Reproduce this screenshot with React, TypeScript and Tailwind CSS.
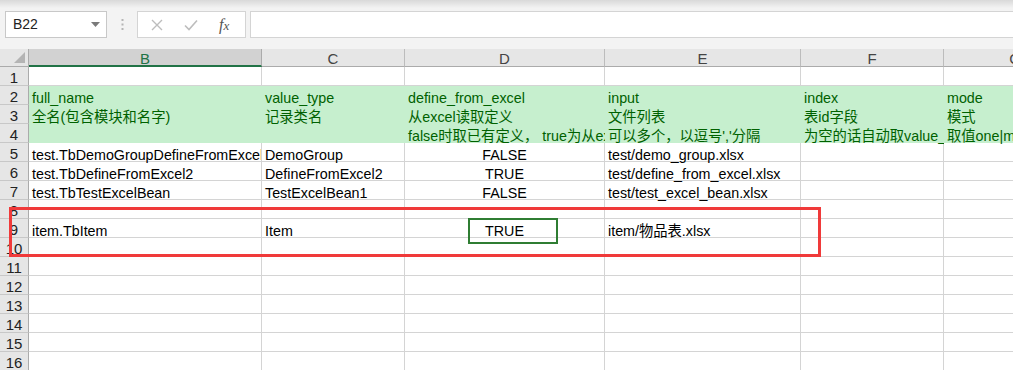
import React from "react";

const FONT = '"Liberation Sans", "Noto Sans CJK SC", sans-serif';

const cols = ["B", "C", "D", "E", "F", "G"];

type Row = { n: number; cells: string[]; green?: boolean };

const rows: Row[] = [
  { n: 1, cells: ["", "", "", "", "", ""] },
  { n: 2, green: true, cells: ["full_name", "value_type", "define_from_excel", "input", "index", "mode"] },
  { n: 3, green: true, cells: ["全名(包含模块和名字)", "记录类名", "从excel读取定义", "文件列表", "表id字段", "模式"] },
  {
    n: 4,
    green: true,
    cells: [
      "",
      "",
      "false时取已有定义，  true为从excel文件读取定义",
      "可以多个，以逗号','分隔",
      "为空的话自动取value_type第一个字段",
      "取值one|map|list",
    ],
  },
  { n: 5, cells: ["test.TbDemoGroupDefineFromExcel", "DemoGroup", "FALSE", "test/demo_group.xlsx", "", ""] },
  { n: 6, cells: ["test.TbDefineFromExcel2", "DefineFromExcel2", "TRUE", "test/define_from_excel.xlsx", "", ""] },
  { n: 7, cells: ["test.TbTestExcelBean", "TestExcelBean1", "FALSE", "test/test_excel_bean.xlsx", "", ""] },
  { n: 8, cells: ["", "", "", "", "", ""] },
  { n: 9, cells: ["item.TbItem", "Item", "TRUE", "item/物品表.xlsx", "", ""] },
  ...[10, 11, 12, 13, 14, 15, 16].map((n) => ({ n, cells: ["", "", "", "", "", ""] })),
];

export default function App() {
  return (
    <div className="w-[1013px] h-[370px] overflow-hidden bg-white relative" style={{ fontFamily: FONT }}>
      {/* Formula bar */}
      <div className="h-[49px] bg-[#f3f3f3] flex flex-col">
        <div className="h-[8px] bg-gradient-to-b from-[#d9d9d9] to-[#f3f3f3]" />
        <div className="flex items-start mt-[3px] h-[27px]">
          <div className="ml-[5px] w-[102px] h-[27px] bg-white border border-[#c8c8c8] flex items-center justify-between pl-[7px] pr-[6px]">
            <span className="text-[14px] text-[#222]">B22</span>
            <svg width="9" height="6" viewBox="0 0 9 6">
              <path d="M0 0 L9 0 L4.5 5 Z" fill="#7a7a7a" />
            </svg>
          </div>
          <div className="w-[30px] h-[27px] flex items-center justify-center">
            <svg width="3" height="11" viewBox="0 0 3 11">
              <rect x="0.5" y="0" width="2" height="2" fill="#b5b5b5" />
              <rect x="0.5" y="4.5" width="2" height="2" fill="#b5b5b5" />
              <rect x="0.5" y="9" width="2" height="2" fill="#b5b5b5" />
            </svg>
          </div>
          <div className="w-[109px] h-[27px] bg-white border border-[#d4d4d4] flex items-center pl-[13px]">
            <svg width="12" height="12" viewBox="0 0 12 12" className="mr-[21px]">
              <path d="M1 1 L11 11 M11 1 L1 11" stroke="#bdbdbd" strokeWidth="1.4" />
            </svg>
            <svg width="14" height="12" viewBox="0 0 14 12" className="mr-[21px]">
              <path d="M1 6.5 L5 10.5 L13 1.5" stroke="#bdbdbd" strokeWidth="1.6" fill="none" />
            </svg>
            <span
              className="text-[16px] italic text-[#555] leading-none"
              style={{ fontFamily: '"Liberation Serif", serif' }}
            >
              f<span className="text-[13px]">x</span>
            </span>
          </div>
          <div className="ml-[4px] flex-1 h-[27px] bg-white border border-r-0 border-[#d4d4d4]" />
        </div>
      </div>

      {/* Sheet */}
      <div className="grid grid-cols-[29px_233px_143px_200px_196px_143px_143px] w-[1087px]">
        {/* Header row */}
        <div className="h-[18px] bg-[#e6e6e6] border-r border-b border-[#ababab] flex items-end justify-end pr-[3px] pb-[3px]">
          <svg width="11" height="11" viewBox="0 0 11 11">
            <path d="M11 0 L11 11 L0 11 Z" fill="#b4b4b4" />
          </svg>
        </div>
        {cols.map((c) => (
          <div
            key={c}
            className={
              c === "B"
                ? "h-[18px] bg-[#d2d2d2] border-r border-[#ababab] border-b-2 border-b-[#217346] flex items-center justify-center pt-[2px] text-[15px] text-[#217346] leading-none"
                : "h-[18px] bg-[#e6e6e6] border-r border-b border-[#bcbcbc] border-b-[#ababab] flex items-center justify-center pt-[2px] text-[15px] text-[#444] leading-none"
            }
          >
            {c}
          </div>
        ))}

        {rows.map((r) => (
          <React.Fragment key={r.n}>
            <div className="h-[19px] bg-[#e6e6e6] border-r border-[#ababab] border-b border-b-[#c8c8c8] flex items-center justify-center pt-[2px] text-[15px] text-[#222] leading-none">
              <span className="relative">{r.n}</span>
            </div>
            {r.cells.map((t, i) => {
              const center = i === 2 && !r.green;
              return (
                <div
                  key={i}
                  className={
                    r.green
                      ? "h-[19px] bg-[#c6efce] text-[#006100] text-[14.3px] leading-[18px] pt-[3px] px-[3px] whitespace-nowrap overflow-x-clip"
                      : center
                      ? "h-[19px] border-r border-b border-[#d4d4d4] text-[14.3px] text-black leading-[18px] pt-[3px] px-[3px] whitespace-nowrap overflow-x-clip text-center"
                      : "h-[19px] border-r border-b border-[#d4d4d4] text-[14.3px] text-black leading-[18px] pt-[3px] px-[3px] whitespace-nowrap overflow-x-clip"
                  }
                >
                  <span className="relative">{t}</span>
                </div>
              );
            })}
          </React.Fragment>
        ))}
      </div>

      {/* Annotations */}
      <div className="absolute left-[9px] top-[207px] w-[812px] h-[50px] border-[3px] border-[#f03a3a] pointer-events-none" />
      <div className="absolute left-[468px] top-[218px] w-[90px] h-[26px] border-2 border-[#2f7d32] pointer-events-none" />
    </div>
  );
}
